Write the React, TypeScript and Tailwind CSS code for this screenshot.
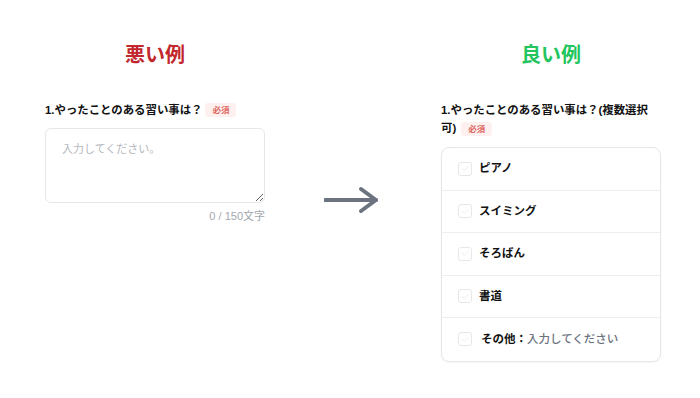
import { Check } from 'lucide-react'

const items = ['ピアノ', 'スイミング', 'そろばん', '書道']

const font = { fontFamily: '"Liberation Sans", "Noto Sans CJK JP", sans-serif' }

function Badge() {
  return (
    <span className="inline-flex items-center justify-center h-[14px] w-[31px] rounded-[3px] bg-[#fdf0ef] text-[8.5px] leading-none text-[#e0665f] align-middle">
      必須
    </span>
  )
}

function Box() {
  return (
    <span className="flex items-center justify-center w-[14px] h-[14px] rounded-[3px] border border-[#e5e7eb] bg-white shrink-0">
      <Check className="w-[9px] h-[9px] text-[#e3e5e8]" strokeWidth={2} />
    </span>
  )
}

export default function App() {
  return (
    <div className="w-[700px] h-[398px] bg-white flex items-start pl-[45px]" style={font}>
      <div className="w-[220px] flex flex-col">
        <h2 className="text-center text-[20px] leading-7 font-bold text-[#c1272d] mt-[41px]">悪い例</h2>
        <div className="mt-[32px] flex items-center gap-[3px] text-[11.4px] leading-[18px] font-bold text-[#111111]">
          1.やったことのある習い事は？
          <Badge />
        </div>
        <textarea
          className="mt-[9px] h-[75px] w-full rounded-md border border-[#e5e7eb] px-4 pt-3 text-[11px] leading-4 placeholder:text-[#b3b7be] outline-none"
          placeholder="入力してください。"
        />
        <div className="mt-[5px] text-right text-[11px] leading-[16px] text-[#a3a8b0]">0 / 150文字</div>
      </div>

      <div className="w-[176px] flex justify-center mt-[186px]">
        <svg width="58" height="28" viewBox="0 0 58 28" fill="none">
          <path d="M1 14 H52" stroke="#6b7280" strokeWidth="4" strokeLinecap="round" />
          <path d="M37 3 L52 14 L37 25" stroke="#6b7280" strokeWidth="4" strokeLinecap="round" strokeLinejoin="round" />
        </svg>
      </div>

      <div className="w-[220px] flex flex-col">
        <h2 className="text-center text-[20px] leading-7 font-bold text-[#22c55e] mt-[41px]">良い例</h2>
        <div className="mt-[32px] text-[11.4px] leading-[18px] font-bold text-[#111111]">
          1.やったことのある習い事は？(複数選択<br />
          可) <span className="ml-[2px]"><Badge /></span>
        </div>
        <div className="mt-[10px] rounded-lg border border-[#e5e7eb] shadow-[0_1px_2px_rgba(0,0,0,0.05)] overflow-hidden">
          {items.map((it) => (
            <div key={it} className="h-[42.5px] flex items-center gap-[7px] pl-4 border-b border-[#eceef1]">
              <Box />
              <span className="text-[11.5px] font-bold text-[#111111]">{it}</span>
            </div>
          ))}
          <div className="h-[42.5px] flex items-center gap-[9px] pl-4">
            <Box />
            <span className="text-[11.5px] font-bold text-[#111111]">
              その他：<span className="font-medium text-[#6b7280]">入力してください</span>
            </span>
          </div>
        </div>
      </div>
    </div>
  )
}
